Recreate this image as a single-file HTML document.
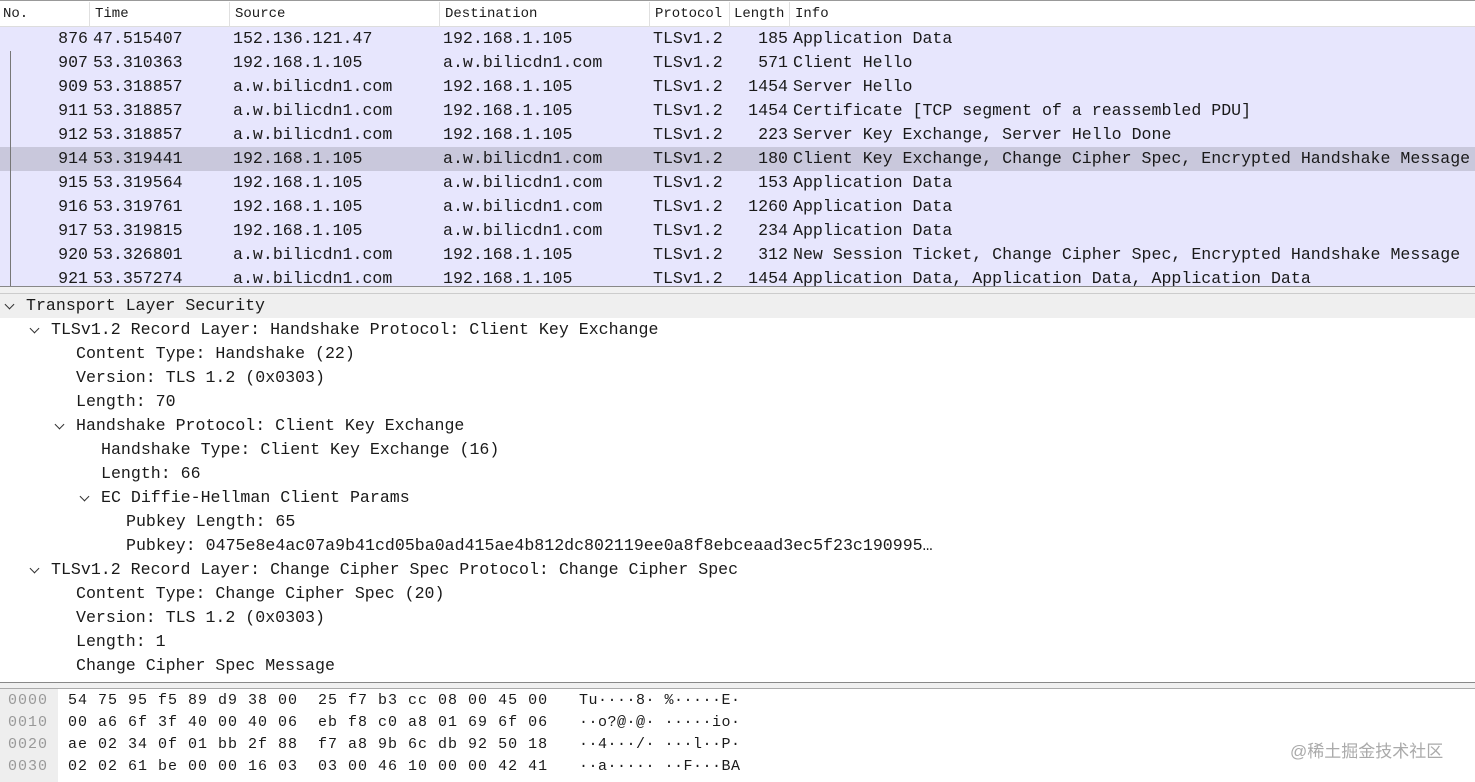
<!DOCTYPE html>
<html><head><meta charset="utf-8"><style>
*{margin:0;padding:0;box-sizing:border-box}
body{width:1475px;height:782px;overflow:hidden;background:#fff;font-family:"Liberation Mono",monospace;color:#1a1a1a;position:relative}
.a{position:absolute;white-space:pre}
.hdr{position:absolute;left:0;top:0;width:1475px;height:27px;border-top:1px solid #999;border-bottom:1px solid #ddd;background:#fff;font-size:14px;font-family:"Liberation Mono",monospace}
.hdr span{position:absolute;top:5px}
.sep{position:absolute;top:1px;width:1px;height:26px;background:#e0e0e0}
.row{position:absolute;left:0;width:1475px;height:24px;background:#e7e6fd;font-size:16.6px;line-height:24px}
.row span{position:absolute;top:0;white-space:pre}
.sel{background:#c9c8dc}
.r{text-align:right}
.d{position:absolute;left:0;width:1475px;height:24px;font-size:16.6px;line-height:24px;white-space:pre}
.hx{position:absolute;left:0;height:22px;font-size:15px;letter-spacing:1px;line-height:22px;white-space:pre}
.chev{position:absolute;width:7px;height:7px;border-right:1.6px solid #333;border-bottom:1.6px solid #333;transform:rotate(45deg)}
</style></head><body>
<div class="hdr">
<span style="left:3px">No.</span><span style="left:95px">Time</span><span style="left:235px">Source</span><span style="left:445px">Destination</span><span style="left:655px">Protocol</span><span style="left:734px">Length</span><span style="left:795px">Info</span>
<div class="sep" style="left:89px"></div><div class="sep" style="left:229px"></div><div class="sep" style="left:439px"></div><div class="sep" style="left:649px"></div><div class="sep" style="left:729px"></div><div class="sep" style="left:789px"></div>
</div>
<div id="rows"></div>
<div class="a" style="left:10px;top:51px;width:1px;height:235px;background:#777"></div>
<div class="a" style="left:0;top:286px;width:1475px;height:8px;background:#f0f0f0;border-top:1px solid #888;border-bottom:1px solid #ccc"></div>
<div class="a" style="left:0;top:294px;width:1475px;height:24px;background:#efefef"></div>
<div id="det"></div>
<div class="a" style="left:0;top:682px;width:1475px;height:7px;background:#f0f0f0;border-top:1px solid #888;border-bottom:1px solid #aaa"></div>
<div class="a" style="left:0;top:689px;width:58px;height:93px;background:#eeeeee"></div>
<div id="hex"></div>
<div class="a" style="left:1290px;top:737px;font-family:'Liberation Sans','Noto Sans CJK SC',sans-serif;font-size:17px;color:#aaa">@稀土掘金技术社区</div>
<script>
var R=[["876","47.515407","152.136.121.47","192.168.1.105","185","Application Data"],
["907","53.310363","192.168.1.105","a.w.bilicdn1.com","571","Client Hello"],
["909","53.318857","a.w.bilicdn1.com","192.168.1.105","1454","Server Hello"],
["911","53.318857","a.w.bilicdn1.com","192.168.1.105","1454","Certificate [TCP segment of a reassembled PDU]"],
["912","53.318857","a.w.bilicdn1.com","192.168.1.105","223","Server Key Exchange, Server Hello Done"],
["914","53.319441","192.168.1.105","a.w.bilicdn1.com","180","Client Key Exchange, Change Cipher Spec, Encrypted Handshake Message"],
["915","53.319564","192.168.1.105","a.w.bilicdn1.com","153","Application Data"],
["916","53.319761","192.168.1.105","a.w.bilicdn1.com","1260","Application Data"],
["917","53.319815","192.168.1.105","a.w.bilicdn1.com","234","Application Data"],
["920","53.326801","a.w.bilicdn1.com","192.168.1.105","312","New Session Ticket, Change Cipher Spec, Encrypted Handshake Message"],
["921","53.357274","a.w.bilicdn1.com","192.168.1.105","1454","Application Data, Application Data, Application Data"]];
var h="";R.forEach(function(r,i){h+='<div class="row'+(i==5?' sel':'')+'" style="top:'+(27+i*24)+'px"><span class="r" style="left:0;width:88px">'+r[0]+'</span><span style="left:93px">'+r[1]+'</span><span style="left:233px">'+r[2]+'</span><span style="left:443px">'+r[3]+'</span><span style="left:653px">TLSv1.2</span><span class="r" style="left:730px;width:58px">'+r[4]+'</span><span style="left:793px">'+r[5]+'</span></div>';});
document.getElementById("rows").innerHTML=h;
var D=[[0,1,"Transport Layer Security"],[1,1,"TLSv1.2 Record Layer: Handshake Protocol: Client Key Exchange"],[2,0,"Content Type: Handshake (22)"],[2,0,"Version: TLS 1.2 (0x0303)"],[2,0,"Length: 70"],[2,1,"Handshake Protocol: Client Key Exchange"],[3,0,"Handshake Type: Client Key Exchange (16)"],[3,0,"Length: 66"],[3,1,"EC Diffie-Hellman Client Params"],[4,0,"Pubkey Length: 65"],[4,0,"Pubkey: 0475e8e4ac07a9b41cd05ba0ad415ae4b812dc802119ee0a8f8ebceaad3ec5f23c190995…"],[1,1,"TLSv1.2 Record Layer: Change Cipher Spec Protocol: Change Cipher Spec"],[2,0,"Content Type: Change Cipher Spec (20)"],[2,0,"Version: TLS 1.2 (0x0303)"],[2,0,"Length: 1"],[2,0,"Change Cipher Spec Message"]];
h="";D.forEach(function(d,i){var t=294+i*24,x=26+d[0]*25;h+='<div class="d" style="top:'+t+'px;left:'+x+'px;width:auto">'+d[2]+'</div>';if(d[1])h+='<div class="chev" style="left:'+(x-20)+'px;top:'+(t+7)+'px"></div>';});
document.getElementById("det").innerHTML=h;
var X=[["0000","54 75 95 f5 89 d9 38 00  25 f7 b3 cc 08 00 45 00","Tu····8· %·····E·"],["0010","00 a6 6f 3f 40 00 40 06  eb f8 c0 a8 01 69 6f 06","··o?@·@· ·····io·"],["0020","ae 02 34 0f 01 bb 2f 88  f7 a8 9b 6c db 92 50 18","··4···/· ···l··P·"],["0030","02 02 61 be 00 00 16 03  03 00 46 10 00 00 42 41","··a····· ··F···BA"]];
h="";X.forEach(function(x,i){var t=690+i*22;h+='<div class="hx" style="top:'+t+'px;left:8px;color:#999">'+x[0]+'</div><div class="hx" style="top:'+t+'px;left:68px">'+x[1]+'</div><div class="hx" style="top:'+t+'px;left:579px;letter-spacing:0.5px">'+x[2]+'</div>';});
document.getElementById("hex").innerHTML=h;
</script>
</body></html>
